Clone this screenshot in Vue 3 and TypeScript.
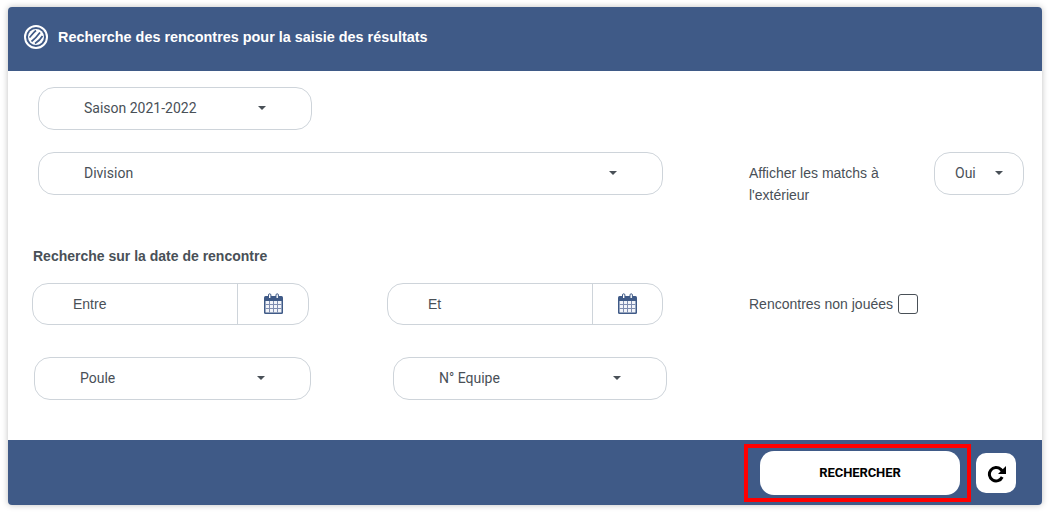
<template>
  <div class="page">
    <section class="card">
      <header class="card-header">
        <svg class="logo" viewBox="0 0 24 24" width="24" height="24" aria-hidden="true">
          <circle cx="12" cy="12" r="11" fill="none" stroke="#fff" stroke-width="2" />
          <circle cx="12" cy="12" r="8" fill="#fff" />
          <path d="M5.5 12.5C7.5 10.5 9 8 12 5.5M7.5 16.5C10.5 14 13.5 11 16 7.5M11 18.5C14 16.5 16.5 14.5 18.5 11" stroke="#3f5a87" stroke-width="1.7" fill="none" />
        </svg>
        <h1>Recherche des rencontres pour la saisie des résultats</h1>
      </header>

      <div class="card-body">
        <div class="row row-season">
          <div class="select season">
            <span>Saison 2021-2022</span>
            <i class="caret"></i>
          </div>
        </div>

        <div class="row row-division">
          <div class="select division">
            <span>Division</span>
            <i class="caret"></i>
          </div>
          <p class="away-label">Afficher les matchs à l'extérieur</p>
          <div class="select away">
            <span>Oui</span>
            <i class="caret"></i>
          </div>
        </div>

        <h2>Recherche sur la date de rencontre</h2>

        <div class="row row-dates">
          <div v-for="d in dates" :key="d.label" class="date-group" :class="d.cls">
            <span class="date-label">{{ d.label }}</span>
            <span class="date-addon">
              <svg viewBox="0 0 19 21" width="19" height="21" aria-hidden="true">
                <rect x="0" y="3" width="19" height="18" rx="1.5" fill="#3f5a87" />
                <rect x="1.5" y="8" width="16" height="11.5" fill="#f2f4f9" />
                <path d="M5.5 8v11.5M9.5 8v11.5M13.5 8v11.5M1.5 11.5h16M1.5 15.5h16" stroke="#7f8db0" stroke-width="1" fill="none" />
                <path d="M4.5 5V2a1.2 1.2 0 0 1 2.4 0v3M12 5V2a1.2 1.2 0 0 1 2.4 0v3" fill="#fff" stroke="#3f5a87" stroke-width="1" />
              </svg>
            </span>
          </div>
          <label class="unplayed">
            Rencontres non jouées
            <span class="checkbox"></span>
          </label>
        </div>

        <div class="row row-pool">
          <div class="select pool">
            <span>Poule</span>
            <i class="caret"></i>
          </div>
          <div class="select team">
            <span>N° Equipe</span>
            <i class="caret"></i>
          </div>
        </div>
      </div>

      <footer class="card-footer">
        <div class="search-outline">
          <button class="search-btn" type="button">RECHERCHER</button>
        </div>
        <button class="reset-btn" type="button" aria-label="Réinitialiser">
          <svg viewBox="0 0 20 18" width="20" height="18" aria-hidden="true">
            <path d="M15.2 12A6.7 6.7 0 1 1 13.8 4.4L15.6 6.2" fill="none" stroke="#000" stroke-width="3" />
            <path d="M19 1V9H11Z" fill="#000" />
          </svg>
        </button>
      </footer>
    </section>
  </div>
</template>

<script setup lang="ts">
const dates = [
  { label: "Entre", cls: "date-from" },
  { label: "Et", cls: "date-to" },
];
</script>

<style>
html,
body {
  background: #fff;
}
</style>

<style scoped>
.page {
  width: 1053px;
  height: 513px;
  padding: 7px 11px 8px 8px;
  box-sizing: border-box;
  font-family: "Liberation Sans", Arial, sans-serif;
  font-size: 14px;
  color: #495057;
}

.card {
  height: 498px;
  display: flex;
  flex-direction: column;
  border-radius: 4px;
  overflow: hidden;
  background: #fff;
  box-shadow: 0 0 6px rgba(0, 0, 0, 0.25);
}

.card-header {
  height: 64px;
  flex: none;
  display: flex;
  align-items: center;
  gap: 10px;
  padding: 0 0 4px 16px;
  box-sizing: border-box;
  background: #3f5a87;
  color: #fff;
}

.logo {
  flex: none;
}

h1 {
  margin: 0;
  font-size: 14.4px;
  font-weight: 700;
}

.card-body {
  flex: 1;
  display: flex;
  flex-direction: column;
}

.row {
  display: flex;
}

.select {
  height: 43px;
  box-sizing: border-box;
  display: flex;
  align-items: center;
  justify-content: space-between;
  border: 1px solid #ced4da;
  border-radius: 16px;
  padding: 0 45px 2px 45px;
  background: #fff;
  font-family: Roboto, sans-serif;
}

.caret {
  width: 0;
  height: 0;
  border-left: 4px solid transparent;
  border-right: 4px solid transparent;
  border-top: 4px solid #495057;
}

.row-season {
  padding: 16px 0 0 30px;
}

.season {
  width: 274px;
}

.row-division {
  padding: 22px 0 0 30px;
  height: 62px;
}

.division {
  width: 625px;
}

.away-label {
  width: 150px;
  margin: 11px 0 0 86px;
  line-height: 21.5px;
}

.away {
  width: 90px;
  margin-left: 35px;
  padding: 0 20px 2px 20px;
}

h2 {
  margin: 32px 0 0 25px;
  font-size: 14px;
  line-height: 20px;
  font-weight: 700;
}

.row-dates {
  padding: 17px 0 0 24px;
}

.date-group {
  height: 42px;
  box-sizing: border-box;
  display: flex;
  align-items: center;
  justify-content: space-between;
  border: 1px solid #ced4da;
  border-radius: 16px;
  padding-left: 40px;
}

.date-from {
  width: 277px;
}

.date-to {
  width: 276px;
  margin-left: 78px;
}

.date-addon {
  width: 71px;
  height: 100%;
  box-sizing: border-box;
  padding-bottom: 2px;
  display: flex;
  align-items: center;
  justify-content: center;
  border-left: 1px solid #ced4da;
}

.date-to .date-addon {
  width: 70px;
}

.unplayed {
  display: flex;
  align-items: center;
  gap: 5px;
  margin-left: 86px;
}

.checkbox {
  width: 18px;
  height: 18px;
  border: 1px solid #495057;
  border-radius: 3px;
}

.row-pool {
  padding: 32px 0 0 26px;
}

.pool {
  width: 277px;
}

.team {
  width: 274px;
  margin-left: 82px;
}

.card-footer {
  height: 65px;
  flex: none;
  display: flex;
  align-items: center;
  justify-content: flex-end;
  padding-right: 26px;
  box-sizing: border-box;
  background: #3f5a87;
}

.search-outline {
  padding: 3px 7px 3px 12px;
  border: 4px solid #f00;
  margin-top: 1px;
  line-height: 0;
}

.search-btn {
  width: 200px;
  height: 44px;
  padding: 0 0 2px;
  border: 0;
  border-radius: 14px;
  background: #fff;
  color: #000;
  font-family: Roboto, sans-serif;
  font-size: 13px;
  font-weight: 700;
  letter-spacing: -0.1px;
}

.reset-btn {
  width: 40px;
  height: 40px;
  margin-left: 5px;
  margin-top: 1px;
  padding: 2px 0 0 1px;
  border: 0;
  border-radius: 10px;
  background: #fff;
  display: flex;
  align-items: center;
  justify-content: center;
}
</style>
